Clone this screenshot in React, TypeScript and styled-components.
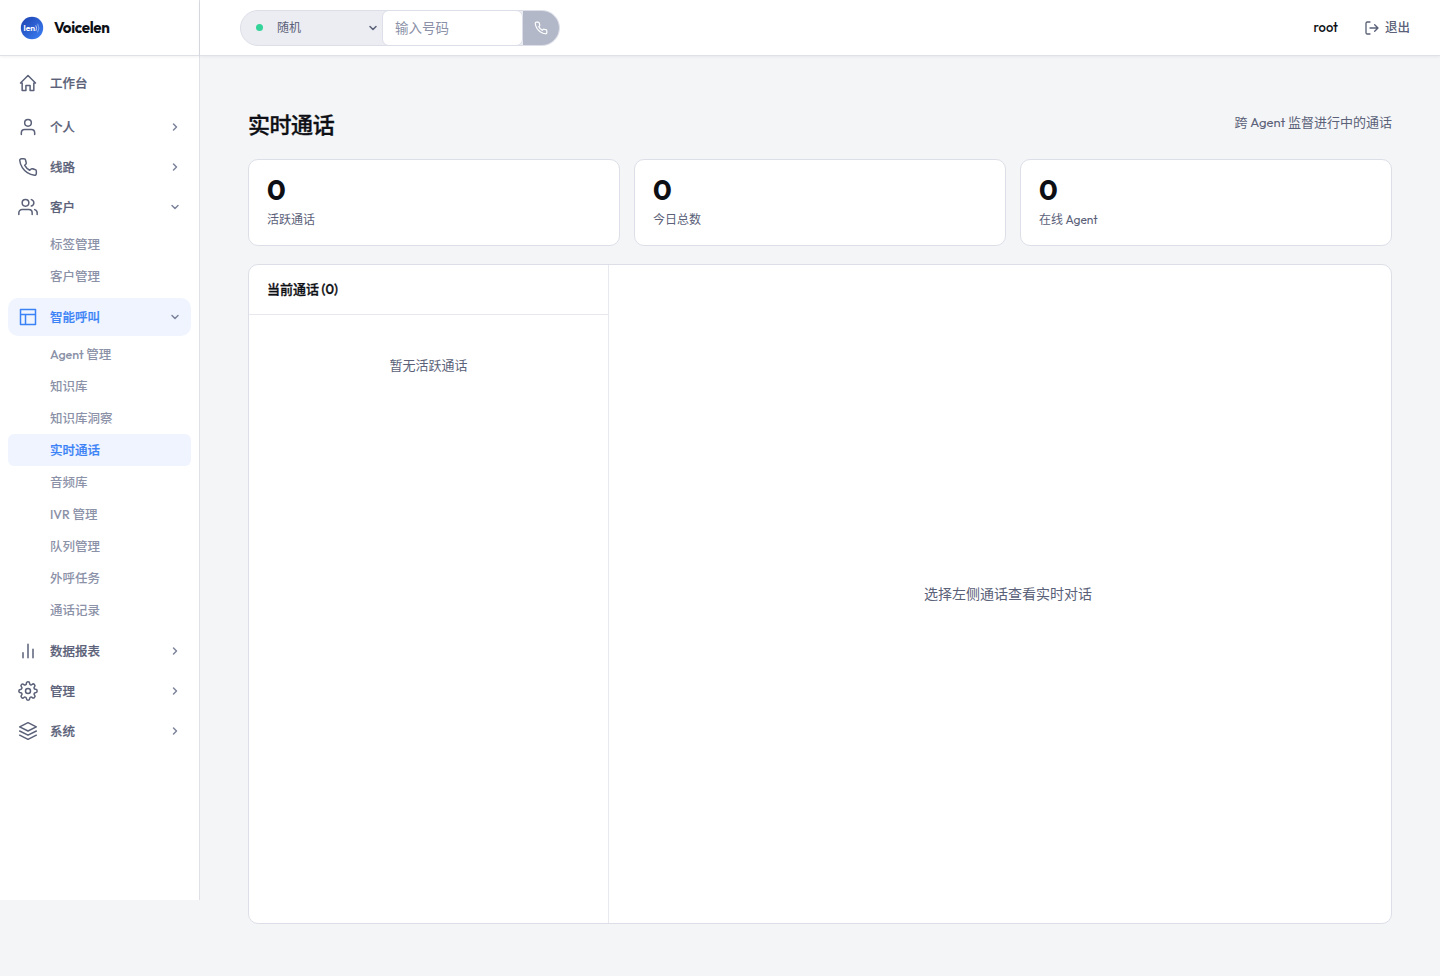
import React from 'react';
import styled, { createGlobalStyle, css } from 'styled-components';

const GlobalStyle = createGlobalStyle`
  *, *::before, *::after { box-sizing: border-box; }
  body {
    margin: 0;
    background: #f4f5f7;
    color: #0d0f14;
    font-family: Outfit, Lato, "Noto Sans CJK SC", sans-serif;
    font-size: 14px;
    -webkit-font-smoothing: antialiased;
  }
  button, input { font: inherit; }
`;

const Shell = styled.div`
  display: grid;
  grid-template-columns: 200px 1fr;
  height: 976px;
`;

const Sidebar = styled.aside`
  height: 900px;
  background: #fff;
  border-right: 1px solid #dfe1e7;
`;

const headerLine = css`
  height: 56px;
  background: #fff;
  border-bottom: 1px solid #dfe1e7;
  box-shadow: 0 1px 3px rgba(15, 20, 40, 0.06);
`;

const Brand = styled.div`
  ${headerLine}
  display: flex;
  align-items: center;
  gap: 10px;
  padding-left: 20px;
`;

const BrandName = styled.span`
  font-size: 15px;
  font-weight: 700;
  letter-spacing: -0.3px;
`;

const Nav = styled.nav`
  display: flex;
  flex-direction: column;
  padding: 8px 8px 0;
`;

const NavItem = styled.a<{ $active?: boolean; $gap?: number }>`
  display: flex;
  align-items: center;
  gap: 12px;
  height: 38px;
  margin-bottom: ${(p) => p.$gap ?? 2}px;
  padding: 0 10px;
  border-radius: 10px;
  font-size: 12.5px;
  font-weight: 500;
  color: ${(p) => (p.$active ? '#3b82f6' : '#5a6178')};
  background: ${(p) => (p.$active ? '#eff4ff' : 'transparent')};
`;

const NavLabel = styled.span`
  flex: 1;
  padding-bottom: 1px;
  line-height: 18px;
  -webkit-text-stroke: 0.2px currentColor;
`;

const SubList = styled.div`
  display: flex;
  flex-direction: column;
  margin-bottom: 6px;
`;

const SubItem = styled.a<{ $active?: boolean }>`
  display: flex;
  align-items: center;
  height: 32px;
  padding: 0 0 2px 42px;
  border-radius: 6px;
  font-size: 12.5px;
  font-weight: 500;
  color: ${(p) => (p.$active ? '#3b82f6' : '#8b91a7')};
  background: ${(p) => (p.$active ? '#eff4ff' : 'transparent')};
  -webkit-text-stroke: ${(p) => (p.$active ? '0.2px currentColor' : '0')};
`;

const Content = styled.div`
  display: flex;
  flex-direction: column;
  min-width: 0;
`;

const TopBar = styled.header`
  ${headerLine}
  flex: none;
  display: flex;
  align-items: center;
  justify-content: space-between;
  padding: 0 30px 0 40px;
`;

const Dialer = styled.div`
  display: flex;
  width: 320px;
  height: 36px;
  border: 1px solid #dddfe8;
  border-radius: 18px;
  overflow: hidden;
  background: #ecedf2;
`;

const LineSelect = styled.div`
  display: flex;
  align-items: center;
  width: 141px;
  padding: 0 3px 0 15px;
  font-size: 12px;
  color: #5a6178;
`;

const StatusDot = styled.i`
  width: 7px;
  height: 7px;
  margin-right: 14px;
  border-radius: 50%;
  background: #34d399;
`;

const LineName = styled.span`
  flex: 1;
  padding-bottom: 2px;
`;

const NumberInput = styled.input`
  width: 141px;
  height: 36px;
  margin-top: -1px;
  padding: 0 12px;
  border: 1px solid #dddfe8;
  border-radius: 7px;
  background: #fff;
  font-size: 13.5px;
  outline: none;
  &::placeholder { color: #8b91a7; }
`;

const CallButton = styled.button`
  display: flex;
  flex: 1;
  align-items: center;
  justify-content: center;
  padding: 0;
  border: 0;
  background: #b2b8c8;
  color: #fff;
`;

const Account = styled.div`
  display: flex;
  align-items: center;
  gap: 26px;
  font-size: 13px;
`;

const UserName = styled.span`
  padding-bottom: 1px;
  font-weight: 500;
`;

const Logout = styled.a`
  display: flex;
  align-items: center;
  gap: 5px;
  font-size: 12.5px;
  font-weight: 500;
  line-height: 18px;
  color: #5a6178;
`;

const LogoutText = styled.span`
  padding-bottom: 1px;
`;

const Main = styled.main`
  display: flex;
  flex: 1;
  flex-direction: column;
  padding: 50px 48px 52px;
`;

const PageHead = styled.div`
  display: flex;
  align-items: center;
  justify-content: space-between;
  height: 33px;
  margin-bottom: 20px;
`;

const Title = styled.h1`
  margin: 0;
  font-size: 22px;
  font-weight: 500;
  letter-spacing: -0.44px;
  -webkit-text-stroke: 0.35px currentColor;
`;

const Hint = styled.span`
  margin-top: -3px;
  font-size: 13px;
  color: #5a6178;
`;

const Stats = styled.section`
  display: grid;
  grid-template-columns: repeat(3, 1fr);
  gap: 14px;
  margin-bottom: 18px;
`;

const StatCard = styled.div`
  height: 87px;
  padding: 14px 18px;
  border: 1px solid #dddfe8;
  border-radius: 10px;
  background: #fff;
`;

const StatValue = styled.div`
  font-size: 28px;
  font-weight: 700;
  line-height: 32px;
`;

const StatLabel = styled.div`
  margin-top: 5px;
  font-size: 12px;
  line-height: 18px;
  color: #5a6178;
`;

const Board = styled.section`
  display: grid;
  grid-template-columns: 360px 1fr;
  flex: 1;
  border: 1px solid #dddfe8;
  border-radius: 10px;
  overflow: hidden;
  background: #fff;
`;

const CallList = styled.div`
  border-right: 1px solid #e8e9ee;
`;

const ListHead = styled.div`
  display: flex;
  align-items: center;
  height: 50px;
  padding: 0 18px 2px;
  border-bottom: 1px solid #e8e9ee;
  font-size: 13px;
  font-weight: 500;
  -webkit-text-stroke: 0.3px currentColor;
`;

const ListEmpty = styled.div`
  padding-top: 40px;
  font-size: 13px;
  line-height: 20px;
  text-align: center;
  color: #5a6178;
`;

const Detail = styled.div`
  display: flex;
  align-items: center;
  justify-content: center;
  padding: 0 0 2px 16px;
  font-size: 14px;
  color: #5a6178;
`;

const StrokeIcon = styled.svg.attrs({ viewBox: '0 0 24 24', fill: 'none' })<{ $size: number; $weight: number }>`
  flex: none;
  width: ${(p) => p.$size}px;
  height: ${(p) => p.$size}px;
  stroke: currentColor;
  stroke-width: ${(p) => p.$weight};
  stroke-linecap: round;
  stroke-linejoin: round;
`;

const Chevron = styled(StrokeIcon)`
  color: #7d849b;
`;

const phonePath =
  'M22 16.92v3a2 2 0 0 1-2.18 2 19.79 19.79 0 0 1-8.63-3.07 19.5 19.5 0 0 1-6-6 19.79 19.79 0 0 1-3.07-8.67A2 2 0 0 1 4.11 2h3a2 2 0 0 1 2 1.72 12.84 12.84 0 0 0 .7 2.81 2 2 0 0 1-.45 2.11L8.09 9.91a16 16 0 0 0 6 6l1.27-1.27a2 2 0 0 1 2.11-.45 12.84 12.84 0 0 0 2.81.7A2 2 0 0 1 22 16.92z';

const icons: Record<string, React.ReactNode> = {
  home: <path d="M3 12h2v9h4.5v-6h5v6H19v-9h2l-9-9-9 9z" />,
  user: (
    <>
      <path d="M20 21v-2a4 4 0 0 0-4-4H8a4 4 0 0 0-4 4v2" />
      <circle cx="12" cy="7" r="4" />
    </>
  ),
  phone: <path d={phonePath} />,
  users: (
    <>
      <path d="M17 21v-2a4 4 0 0 0-4-4H5a4 4 0 0 0-4 4v2M23 21v-2a4 4 0 0 0-3-3.87M16 3.13a4 4 0 0 1 0 7.75" />
      <circle cx="9" cy="7" r="4" />
    </>
  ),
  layout: <path d="M3 3h18v18H3zM3 9h18M9 21V9" />,
  chart: <path d="M18 20V10M12 20V4M6 20v-6" />,
  gear: (
    <>
      <circle cx="12" cy="12" r="3" />
      <path d="M19.4 15a1.65 1.65 0 0 0 .33 1.82l.06.06a2 2 0 0 1-2.83 2.83l-.06-.06a1.65 1.65 0 0 0-1.82-.33 1.65 1.65 0 0 0-1 1.51V21a2 2 0 0 1-4 0v-.09A1.65 1.65 0 0 0 9 19.4a1.65 1.65 0 0 0-1.82.33l-.06.06a2 2 0 0 1-2.83-2.83l.06-.06a1.65 1.65 0 0 0 .33-1.82 1.65 1.65 0 0 0-1.51-1H3a2 2 0 0 1 0-4h.09A1.65 1.65 0 0 0 4.6 9a1.65 1.65 0 0 0-.33-1.82l-.06-.06a2 2 0 0 1 2.83-2.83l.06.06a1.65 1.65 0 0 0 1.82.33H9a1.65 1.65 0 0 0 1-1.51V3a2 2 0 0 1 4 0v.09a1.65 1.65 0 0 0 1 1.51 1.65 1.65 0 0 0 1.82-.33l.06-.06a2 2 0 0 1 2.83 2.83l-.06.06a1.65 1.65 0 0 0-.33 1.82V9a1.65 1.65 0 0 0 1.51 1H21a2 2 0 0 1 0 4h-.09a1.65 1.65 0 0 0-1.51 1z" />
    </>
  ),
  layers: <path d="M12 2L2 7l10 5 10-5-10-5zM2 17l10 5 10-5M2 12l10 5 10-5" />,
  right: <path d="M9 18l6-6-6-6" />,
  down: <path d="M6 9l6 6 6-6" />,
  logout: <path d="M9 21H5a2 2 0 0 1-2-2V5a2 2 0 0 1 2-2h4M16 17l5-5-5-5M21 12H9" />,
};

function Icon({ name, size = 20, weight = 1.8 }: { name: string; size?: number; weight?: number }) {
  return (
    <StrokeIcon $size={size} $weight={weight}>
      {icons[name]}
    </StrokeIcon>
  );
}

function Logo() {
  return (
    <svg width="24" height="24" viewBox="0 0 24 24">
      <defs>
        <linearGradient id="logoFill" x1="0" y1="0" x2="1" y2="1">
          <stop offset="0" stopColor="#1e40af" />
          <stop offset="1" stopColor="#3b82f6" />
        </linearGradient>
      </defs>
      <circle cx="12" cy="12" r="11.2" fill="url(#logoFill)" />
      <text x="3.6" y="15" fill="#fff" fontSize="8" fontWeight="600" textLength="11.6" lengthAdjust="spacingAndGlyphs">
        len
      </text>
      <path d="M15.8 9.4q1.7 2.9 0 5.6" stroke="#fff" strokeWidth="0.8" fill="none" opacity="0.85" />
      <path d="M17.6 7.8q2.6 4.3 0 8.6" stroke="#fff" strokeWidth="0.7" fill="none" opacity="0.6" />
    </svg>
  );
}

type Entry = { label: string; icon: string; leaf?: boolean; active?: boolean; children?: string[] };

const menu: Entry[] = [
  { label: '工作台', icon: 'home', leaf: true },
  { label: '个人', icon: 'user' },
  { label: '线路', icon: 'phone' },
  { label: '客户', icon: 'users', children: ['标签管理', '客户管理'] },
  {
    label: '智能呼叫',
    icon: 'layout',
    active: true,
    children: ['Agent 管理', '知识库', '知识库洞察', '实时通话', '音频库', 'IVR 管理', '队列管理', '外呼任务', '通话记录'],
  },
  { label: '数据报表', icon: 'chart' },
  { label: '管理', icon: 'gear' },
  { label: '系统', icon: 'layers' },
];

const stats = [
  { value: 0, label: '活跃通话' },
  { value: 0, label: '今日总数' },
  { value: 0, label: '在线 Agent' },
];

export default function App() {
  return (
    <Shell>
      <GlobalStyle />
      <Sidebar>
        <Brand>
          <Logo />
          <BrandName>Voicelen</BrandName>
        </Brand>
        <Nav>
          {menu.map((entry) => (
            <React.Fragment key={entry.label}>
              <NavItem $active={entry.active} $gap={entry.leaf ? 6 : 2}>
                <Icon name={entry.icon} />
                <NavLabel>{entry.label}</NavLabel>
                {!entry.leaf && (
                  <Chevron $size={12} $weight={3}>
                    {icons[entry.children ? 'down' : 'right']}
                  </Chevron>
                )}
              </NavItem>
              {entry.children && (
                <SubList>
                  {entry.children.map((label) => (
                    <SubItem key={label} $active={label === '实时通话'}>
                      {label}
                    </SubItem>
                  ))}
                </SubList>
              )}
            </React.Fragment>
          ))}
        </Nav>
      </Sidebar>
      <Content>
        <TopBar>
          <Dialer>
            <LineSelect>
              <StatusDot />
              <LineName>随机</LineName>
              <Icon name="down" size={12} weight={3} />
            </LineSelect>
            <NumberInput placeholder="输入号码" />
            <CallButton>
              <Icon name="phone" size={14} weight={2} />
            </CallButton>
          </Dialer>
          <Account>
            <UserName>root</UserName>
            <Logout>
              <Icon name="logout" size={16} weight={2} />
              <LogoutText>退出</LogoutText>
            </Logout>
          </Account>
        </TopBar>
        <Main>
          <PageHead>
            <Title>实时通话</Title>
            <Hint>跨 Agent 监督进行中的通话</Hint>
          </PageHead>
          <Stats>
            {stats.map((stat) => (
              <StatCard key={stat.label}>
                <StatValue>{stat.value}</StatValue>
                <StatLabel>{stat.label}</StatLabel>
              </StatCard>
            ))}
          </Stats>
          <Board>
            <CallList>
              <ListHead>当前通话 (0)</ListHead>
              <ListEmpty>暂无活跃通话</ListEmpty>
            </CallList>
            <Detail>选择左侧通话查看实时对话</Detail>
          </Board>
        </Main>
      </Content>
    </Shell>
  );
}
